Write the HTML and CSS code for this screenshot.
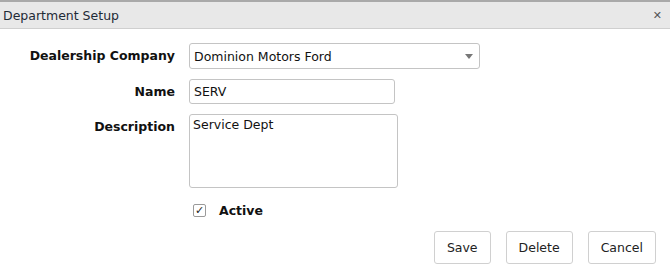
FILE: index.html
```html
<!DOCTYPE html>
<html>
<head>
<meta charset="utf-8">
<link rel="stylesheet" href="styles.css">
</head>
<body>
<div class="dialog">
  <div class="titlebar">
    <span class="title">Department Setup</span>
    <span class="close">&#x2715;</span>
  </div>
  <div class="form">
    <label class="lbl lbl-select">Dealership Company</label>
    <div class="select">
      <span>Dominion Motors Ford</span>
      <span class="caret"></span>
    </div>
    <label class="lbl lbl-name">Name</label>
    <div class="input">SERV</div>
    <label class="lbl lbl-desc">Description</label>
    <div class="textarea">Service Dept</div>
    <div></div>
    <div class="check-row">
      <span class="checkbox">&#x2713;</span>
      <span class="check-label">Active</span>
    </div>
  </div>
  <div class="buttons">
    <button class="btn btn-save">Save</button>
    <button class="btn btn-delete">Delete</button>
    <button class="btn btn-cancel">Cancel</button>
  </div>
</div>
</body>
</html>
```
FILE: styles.css
```css
html, body {
  margin: 0;
  padding: 0;
  background: #fff;
}
body {
  font-family: "DejaVu Sans", Verdana, sans-serif;
  font-size: 12.5px;
  color: #111;
}
.titlebar {
  height: 26px;
  background: #e8e8e8;
  border-top: 2px solid #a9a9a9;
  border-bottom: 1px solid #cfcfcf;
  display: flex;
  align-items: center;
  justify-content: space-between;
  padding: 0 8px 0 3px;
}
.title {
  color: #1e2a36;
  font-size: 12.5px;
}
.close {
  color: #555;
  font-size: 11px;
  font-weight: bold;
}
.form {
  display: grid;
  grid-template-columns: 175px 1fr;
  column-gap: 14px;
  padding-top: 14px;
  align-items: start;
}
.lbl {
  text-align: right;
  font-weight: bold;
  color: #111;
}
.lbl-select { margin-top: 5px; }
.lbl-name { margin-top: 5px; }
.lbl-desc { margin-top: 5px; }
.select {
  border: 1px solid #c4c4c4;
  border-radius: 3px;
  display: flex;
  align-items: center;
  justify-content: space-between;
  padding: 0 6px 0 4px;
  box-sizing: border-box;
  width: 291px;
  height: 26px;
  margin-bottom: 10px;
}
.caret {
  width: 0;
  height: 0;
  border-left: 4px solid transparent;
  border-right: 4px solid transparent;
  border-top: 5px solid #777;
}
.input {
  width: 206px;
  height: 25px;
  box-sizing: border-box;
  border: 1px solid #c4c4c4;
  border-radius: 3px;
  padding: 0 4px;
  display: flex;
  align-items: center;
  margin-bottom: 10px;
}
.textarea {
  width: 209px;
  height: 74px;
  box-sizing: border-box;
  border: 1px solid #c4c4c4;
  border-radius: 3px;
  padding: 2px 3px;
  margin-bottom: 15px;
}
.check-row {
  display: flex;
  align-items: center;
  padding-left: 4px;
}
.checkbox {
  width: 13px;
  height: 13px;
  box-sizing: border-box;
  border: 1px solid #9a9a9a;
  border-radius: 2px;
  font-size: 11px;
  line-height: 11px;
  text-align: center;
  color: #222;
}
.check-label {
  font-weight: bold;
  margin-left: 13px;
}
.buttons {
  display: flex;
  justify-content: flex-end;
  gap: 15px;
  padding: 13px 14px 0 0;
}
.btn {
  font-family: "DejaVu Sans", Verdana, sans-serif;
  font-size: 12.5px;
  color: #222;
  background: #fff;
  border: 1px solid #d0d0d0;
  border-radius: 3px;
  height: 33px;
  padding: 0 12px;
}
```
